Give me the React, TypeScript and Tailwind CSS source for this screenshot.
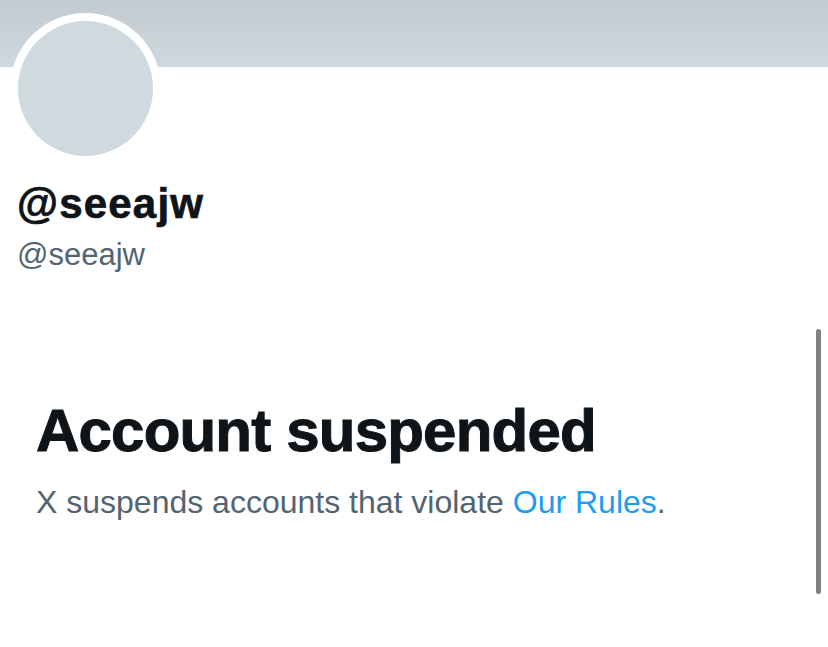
export default function App() {
  return (
    <div
      className="relative h-[647px] w-full overflow-hidden bg-white"
      style={{ fontFamily: '"Liberation Sans", Arial, sans-serif' }}
    >
      {/* banner */}
      <div className="h-[67px] bg-gradient-to-b from-[#c3cbd2] to-[#cfd8dd]" />

      {/* avatar */}
      <div className="-mt-[54.5px] ml-[10px] h-[151px] w-[151px] rounded-full bg-white p-[8px]">
        <div className="h-full w-full rounded-full bg-[#cfd9de]" />
      </div>

      <div className="mt-[16px] pl-[17px] text-[42px] leading-[48px] font-bold tracking-[1.2px] text-[#0f1419] [-webkit-text-stroke:0.7px_#0f1419]">
        @seeajw
      </div>
      <div className="mt-[9px] pl-[17px] text-[31px] leading-[36px] text-[#536471]">
        @seeajw
      </div>

      <div className="mt-[122px] pl-[36px]">
        <h1 className="text-[60px] leading-[72px] font-bold tracking-[-0.8px] text-[#0f1419] [-webkit-text-stroke:1px_#0f1419]">
          Account suspended
        </h1>
        <p className="mt-[15px] text-[32px] leading-[40px] text-[#536471]">
          X suspends accounts that violate{" "}
          <a className="text-[#1d9bf0]">Our Rules</a>.
        </p>
      </div>

      {/* scrollbar */}
      <div className="absolute left-[816px] top-[329px] h-[265px] w-[5px] rounded-full bg-[#808080]" />
    </div>
  );
}
